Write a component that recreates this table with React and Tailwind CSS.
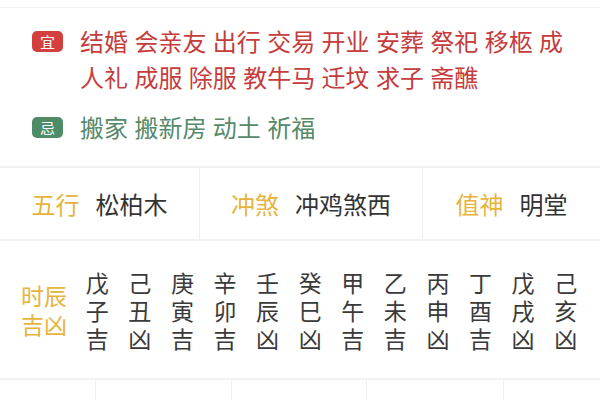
const yi = ['结婚', '会亲友', '出行', '交易', '开业', '安葬', '祭祀', '移柩', '成人礼', '成服', '除服', '教牛马', '迁坟', '求子', '斋醮'];
const ji = ['搬家', '搬新房', '动土', '祈福'];

const hours = [
  ['戊', '子', '吉'], ['己', '丑', '凶'], ['庚', '寅', '吉'], ['辛', '卯', '吉'],
  ['壬', '辰', '凶'], ['癸', '巳', '凶'], ['甲', '午', '吉'], ['乙', '未', '吉'],
  ['丙', '申', '凶'], ['丁', '酉', '吉'], ['戊', '戌', '凶'], ['己', '亥', '凶'],
];

function Badge({ label, color }) {
  return (
    <div className="h-[36px] flex items-center shrink-0">
      <span className={`w-[31px] h-[21px] rounded-[5px] flex items-center justify-center text-white text-[15px] leading-none ${color}`}>
        {label}
      </span>
    </div>
  );
}

function InfoCell({ label, value, width, last }) {
  return (
    <div className={`${width} h-full flex items-center justify-center ${last ? '' : 'border-r border-[#efefef]'}`}>
      <span className="text-[#e6b43c]">{label}</span>
      <span className="ml-[16px] text-[#333]">{value}</span>
    </div>
  );
}

export default function App() {
  return (
    <div
      className="w-[600px] h-[400px] bg-white overflow-hidden text-[24px]"
      style={{ fontFamily: '"Noto Sans CJK SC", "Noto Sans", sans-serif' }}
    >
      <div className="h-[8px] border-b border-[#f0f0f0]" />

      {/* 宜 / 忌 */}
      <div className="h-[160px] pt-[15px] pl-[32px] border-b-2 border-[#f2f2f2]">
        <div className="flex">
          <Badge label="宜" color="bg-[#d23f3d]" />
          <p className="ml-[17px] w-[488px] leading-[36px] text-[#c63c3c] [word-spacing:1px]">{yi.join(' ')}</p>
        </div>
        <div className="flex mt-[14px]">
          <Badge label="忌" color="bg-[#4e8c67]" />
          <p className="ml-[17px] leading-[36px] text-[#55896a] [word-spacing:1px]">{ji.join(' ')}</p>
        </div>
      </div>

      {/* 五行 冲煞 值神 */}
      <div className="h-[73px] flex border-b-2 border-[#f2f2f2]">
        <InfoCell label="五行" value="松柏木" width="w-[200px]" />
        <InfoCell label="冲煞" value="冲鸡煞西" width="w-[223px]" />
        <InfoCell label="值神" value="明堂" width="w-[177px]" last />
      </div>

      {/* 时辰吉凶 */}
      <div className="h-[139px] flex items-center border-b-2 border-[#f2f2f2]">
        <div className="w-[76px] pl-[21px] text-[23px] leading-[29px] text-[#e6b43c]">
          <div>时辰</div>
          <div>吉凶</div>
        </div>
        <div className="w-[511px] grid grid-cols-12 text-[23px] leading-[28px] text-[#3a3a3a]">
          {hours.map((h, i) => (
            <div key={i} className="flex flex-col items-center">
              {h.map((c, j) => <span key={j}>{c}</span>)}
            </div>
          ))}
        </div>
      </div>

      <div className="h-[20px] flex">
        <div className="w-[96px] border-r border-[#f0f0f0]" />
        <div className="w-[136px] border-r border-[#f0f0f0]" />
        <div className="w-[135px] border-r border-[#f0f0f0]" />
        <div className="w-[137px] border-r border-[#f0f0f0]" />
        <div className="flex-1" />
      </div>
    </div>
  );
}
